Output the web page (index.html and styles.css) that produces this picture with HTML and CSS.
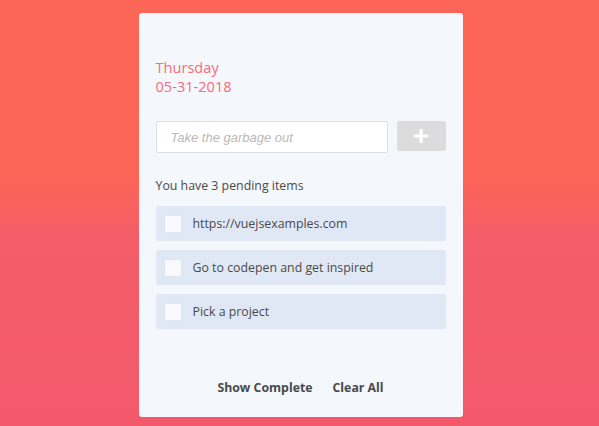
FILE: index.html
```html
<!DOCTYPE html>
<html>
<head>
<meta charset="utf-8">
<link rel="stylesheet" href="styles.css">
</head>
<body>
<div class="card">
  <div class="date">
    <div>Thursday</div>
    <div>05-31-2018</div>
  </div>
  <div class="add-row">
    <input class="add-input" type="text" placeholder="Take the garbage out">
    <button class="add-btn" aria-label="Add">
      <svg width="14" height="14" viewBox="0 0 14 14"><rect x="5.5" y="0" width="3" height="14" fill="#fff"/><rect x="0" y="5.5" width="14" height="3" fill="#fff"/></svg>
    </button>
  </div>
  <p class="pending">You have 3 pending items</p>
  <ul class="list">
    <li class="item"><span class="check"></span><span>https://vuejsexamples.com</span></li>
    <li class="item"><span class="check"></span><span>Go to codepen and get inspired</span></li>
    <li class="item"><span class="check"></span><span>Pick a project</span></li>
  </ul>
  <div class="footer">
    <span class="link">Show Complete</span>
    <span class="link">Clear All</span>
  </div>
</div>
</body>
</html>
```
FILE: styles.css
```css
html, body {
  margin: 0;
  height: 100%;
}
body {
  background: linear-gradient(to bottom, #fd6656 0%, #fb6457 42%, #f55d69 56%, #f3596b 100%);
  font-family: "Open Sans", "Liberation Sans", sans-serif;
  overflow: hidden;
}
.card {
  box-sizing: border-box;
  width: 324px;
  height: 404px;
  margin: 13px auto 0;
  position: relative;
  left: 1px;
  background: #f4f7fc;
  border-radius: 3px;
  padding: 45px 17px 0;
  display: flex;
  flex-direction: column;
}
.date {
  color: #fa6b74;
  font-size: 14.6px;
  line-height: 19px;
}
.add-row {
  display: flex;
  align-items: flex-start;
  gap: 9px;
  margin-top: 25px;
}
.add-input {
  box-sizing: border-box;
  flex: 1;
  height: 32px;
  border: 1px solid #dcdfe4;
  border-radius: 2px;
  background: #fff;
  padding: 0 14px;
  font-family: "Liberation Sans", Arial, sans-serif;
  font-size: 13px;
  font-style: italic;
  outline: none;
}
.add-input::placeholder {
  color: #b9b9b9;
}
.add-btn {
  box-sizing: border-box;
  width: 49px;
  height: 30px;
  border: none;
  border-radius: 2px;
  background: #dcdcdc;
  display: flex;
  align-items: center;
  justify-content: center;
  padding: 0;
}
.pending {
  margin: 24px 0 0;
  font-size: 12.35px;
  line-height: 18px;
  color: #4a4a4a;
}
.list {
  list-style: none;
  margin: 11px 0 0;
  padding: 0;
  display: flex;
  flex-direction: column;
  gap: 9px;
}
.item {
  height: 35px;
  background: #e1e8f5;
  border-radius: 2px;
  display: flex;
  align-items: center;
  padding-left: 8px;
  font-size: 12.35px;
  color: #4a4a4a;
}
.check {
  box-sizing: border-box;
  width: 18px;
  height: 18px;
  background: #f7f9fd;
  border: 1px solid #dfe5ef;
  border-radius: 1px;
  margin-right: 11px;
}
.footer {
  margin-top: 50px;
  display: flex;
  justify-content: center;
  gap: 20px;
  font-size: 12.3px;
  line-height: 18px;
  font-weight: 700;
  color: #4a4a4a;
}
```
